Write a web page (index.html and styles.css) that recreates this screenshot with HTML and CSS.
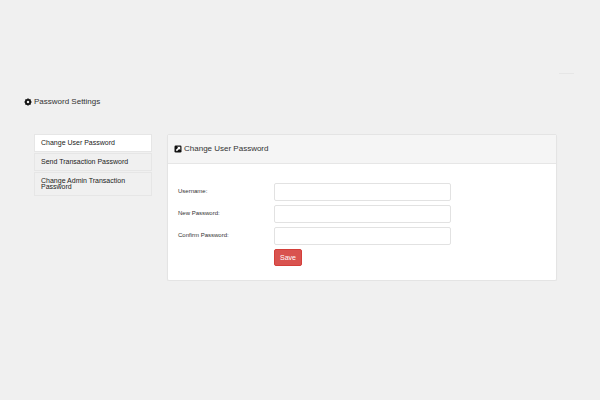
FILE: index.html
```html
<!DOCTYPE html>
<html lang="en">
<head>
  <meta charset="UTF-8" />
  <meta name="viewport" content="width=device-width, initial-scale=1.0"/>
  <title>Password Settings</title>
  <link rel="stylesheet" href="styles.css">
</head>
<body>
  <hr class="divider">

  <h1 class="page-title">
    <svg class="icon" viewBox="0 0 16 16" aria-hidden="true">
      <circle cx="8" cy="8" r="4.3" fill="none" stroke="#111" stroke-width="3.6"/>
      <path d="M8 1v2M8 13v2M1 8h2M13 8h2M3 3l2 2M11 11l2 2M3 13l2-2M11 5l2-2" stroke="#111" stroke-width="3.2"/>
    </svg>
    Password Settings
  </h1>

  <div class="content">
    <nav class="menu">
      <a class="active" href="#user">Change User Password</a>
      <a href="#send">Send Transaction Password</a>
      <a href="#admin">Change Admin Transaction Password</a>
    </nav>

    <main class="panel">
      <h2 class="panel-title">
        <svg class="icon" viewBox="0 0 16 16" aria-hidden="true">
          <rect x="1" y="1" width="14" height="14" rx="2.5" fill="#111"/>
          <path d="M6 3.5h6.5V10l-2.2-2.2-4.5 4.7-2.3-2.3 4.7-4.5z" fill="#fff"/>
        </svg>
        Change User Password
      </h2>
      <form class="panel-body">
        <label for="username">Username:</label>
        <input type="text" id="username">
        <label for="newPassword">New Password:</label>
        <input type="password" id="newPassword">
        <label for="confirmPassword">Confirm Password:</label>
        <input type="password" id="confirmPassword">
        <button type="button">Save</button>
      </form>
    </main>
  </div>
</body>
</html>
```

FILE: styles.css
```css
* {
  box-sizing: border-box;
}

body {
  margin: 0;
  padding: 73px 26px 0 24px;
  background: #f0f0f0;
  color: #333;
  font-family: "Liberation Sans", Arial, sans-serif;
  font-size: 7px;
}

.divider {
  width: 15px;
  height: 1px;
  margin: 0 0 0 auto;
  border: 0;
  background: #e6e6e6;
}

.page-title,
.panel-title {
  display: flex;
  align-items: center;
  gap: 2px;
  margin: 0;
  font-size: 8px;
  font-weight: normal;
  line-height: 10px;
}

.page-title {
  margin-top: 23px;
}

.icon {
  width: 8px;
  height: 8px;
}

.content {
  display: flex;
  align-items: flex-start;
  gap: 15px;
  padding: 27px 17px 0 10px;
}

.menu {
  display: flex;
  flex-direction: column;
  gap: 1px;
  width: 118px;
}

.menu a {
  padding: 5px 6px;
  border: 1px solid #e6e6e6;
  color: #222;
  line-height: 6px;
  text-decoration: none;
}

.menu a.active {
  background: #fff;
}

.panel {
  flex: 1;
  background: #fff;
  border: 1px solid #e4e4e4;
  border-radius: 2px;
  box-shadow: 0 1px 1px rgba(0,0,0,0.04);
}

.panel-title {
  padding: 9px 6px;
  background: #f5f5f5;
  border-bottom: 1px solid #e6e6e6;
}

.panel-body {
  display: grid;
  grid-template-columns: 86px minmax(0, 177px);
  gap: 4px 10px;
  padding: 19px 10px 14px;
}

.panel-body label {
  padding-top: 4px;
  font-size: 6px;
  line-height: 8px;
}

.panel-body input {
  width: 100%;
  height: 18px;
  padding: 2px 5px;
  border: 1px solid #e2e2e2;
  border-radius: 2px;
  background: #fff;
  font-family: inherit;
  font-size: 7px;
}

.panel-body button {
  grid-column: 2;
  justify-self: start;
  padding: 4px 5px;
  border: 1px solid #d43f3a;
  border-radius: 2px;
  background: #d9534f;
  color: #fff;
  font-family: inherit;
  font-size: 7px;
  line-height: 7px;
  cursor: pointer;
}
```
